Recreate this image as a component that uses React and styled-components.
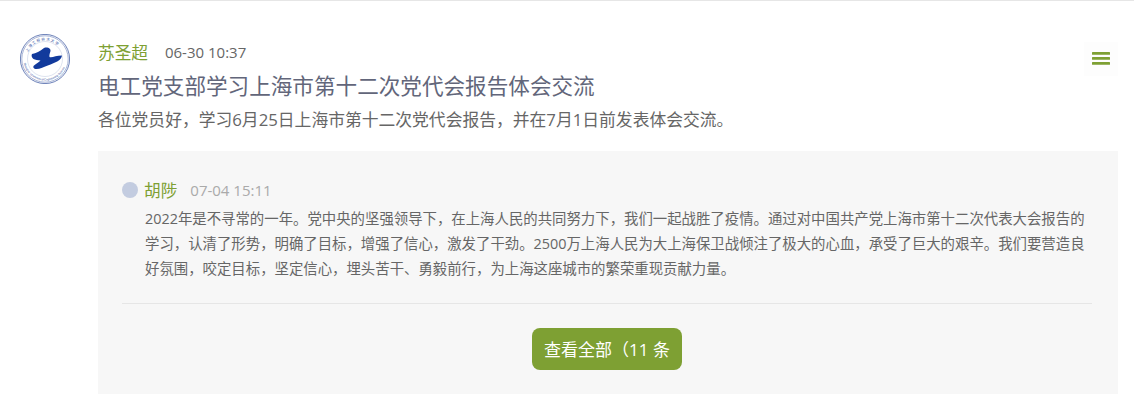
import React from "react";
import styled, { createGlobalStyle } from "styled-components";

const GlobalStyle = createGlobalStyle`
  html, body {
    margin: 0;
    padding: 0;
    background: #fff;
    font-family: "Open Sans", "Noto Sans CJK SC", sans-serif;
    overflow: hidden;
  }
`;

const Page = styled.div`
  box-sizing: border-box;
  height: 406px;
  border-top: 1px solid #e6e6e6;
  display: flex;
  padding: 33px 16px 0 20px;
  gap: 28px;
`;

const Avatar = styled.div`
  width: 50px;
  height: 50px;
  flex-shrink: 0;
`;

const Main = styled.div`
  flex: 1;
  position: relative;
  min-width: 0;
`;

const Meta = styled.div`
  display: flex;
  align-items: center;
  height: 36px;
`;

const Name = styled.span`
  color: #7ea033;
  font-size: 16.67px;
  margin-right: ${(p) => p.$gap}px;
`;

const Time = styled.span`
  color: ${(p) => p.$color};
  font-size: 15px;
`;

const Title = styled.div`
  color: #62667a;
  font-size: 21.6px;
  line-height: 32px;
`;

const Desc = styled.div`
  color: #666;
  font-size: 16.8px;
  line-height: 36px;
`;

const MenuButton = styled.div`
  position: absolute;
  top: 8px;
  right: 0;
  box-sizing: border-box;
  width: 34px;
  height: 34px;
  padding-bottom: 2px;
  background: #fdfdfd;
  display: flex;
  align-items: center;
  justify-content: center;
`;

const Panel = styled.div`
  margin-top: 13px;
  height: 243px;
  background: #f7f7f7;
  padding: 24px 26px 0 24px;
  box-sizing: border-box;
`;

const CommentHead = styled.div`
  display: flex;
  align-items: center;
  height: 30px;
`;

const Dot = styled.span`
  width: 16px;
  height: 16px;
  border-radius: 50%;
  background: #c3cce0;
  margin-right: 6px;
`;

const CommentBody = styled.div`
  margin: 1px 0 0 23px;
  color: #666;
  font-size: 14.4px;
  line-height: 25.2px;
`;

const Divider = styled.div`
  margin-top: 21px;
  height: 1px;
  background: #e6e6e6;
`;

const More = styled.div`
  display: flex;
  justify-content: center;
  margin-top: 24px;
`;

const MoreButton = styled.div`
  width: 150px;
  height: 42px;
  background: #7ea033;
  border-radius: 8px;
  color: #fff;
  font-size: 17px;
  display: flex;
  align-items: center;
  justify-content: center;
`;

const Logo = () => (
  <svg width="50" height="50" viewBox="0 0 50 50">
    <circle cx="25" cy="25" r="24.6" fill="#fff" stroke="#2c4a9a" strokeWidth="0.7" />
    <circle cx="25" cy="25" r="23.2" fill="none" stroke="#2c4a9a" strokeWidth="0.4" />
    <circle cx="25" cy="25" r="17.5" fill="none" stroke="#9fadd2" strokeWidth="0.35" />
    <defs>
      <path id="ring-top" d="M6.5 25a18.5 18.5 0 0 1 37 0" />
      <path id="ring-bottom" d="M3.5 25a21.5 21.5 0 0 0 43 0" />
    </defs>
    <text fontSize="3.6" fill="#3d5aa6" fontFamily="Noto Sans CJK SC" letterSpacing="1">
      <textPath href="#ring-top" startOffset="12%">上海工程技术大学</textPath>
    </text>
    <text fontSize="2.8" fill="#2c4a9a" fontFamily="Liberation Sans">
      <textPath href="#ring-bottom" startOffset="6%">Shanghai University of Engineering Science</textPath>
    </text>
    <path
      d="M12 20 C16 19.5 20 17 24 14 C27 12.8 31 14 30.5 17 C30 19 29 21 29.5 23 C32 24 36 21.5 42 21.5 C41.5 25 38 27.5 35 28.5 C32 30 29 31 26.5 32 C23 33.5 20 35 16.5 35 C13.5 35 12.5 33 14 31.5 C16 29.5 19 28.5 20.5 26.5 C18 26 15 26 13.5 25 C12 24 11 21.5 12 20 Z"
      fill="#123a9c"
    />
  </svg>
);

const MenuIcon = () => (
  <svg width="18" height="13" viewBox="0 0 18 13">
    <rect x="0" y="0" width="18" height="2.8" rx="0.5" fill="#7ea033" />
    <rect x="0" y="5" width="18" height="2.8" rx="0.5" fill="#7ea033" />
    <rect x="0" y="10" width="18" height="2.8" rx="0.5" fill="#7ea033" />
  </svg>
);

export default function App() {
  return (
    <>
      <GlobalStyle />
      <Page>
        <Avatar>
          <Logo />
        </Avatar>
        <Main>
          <Meta>
            <Name $gap={17}>苏圣超</Name>
            <Time $color="#666">06-30 10:37</Time>
          </Meta>
          <Title>电工党支部学习上海市第十二次党代会报告体会交流</Title>
          <Desc>各位党员好，学习6月25日上海市第十二次党代会报告，并在7月1日前发表体会交流。</Desc>
          <MenuButton>
            <MenuIcon />
          </MenuButton>
          <Panel>
            <CommentHead>
              <Dot />
              <Name $gap={13}>胡陟</Name>
              <Time $color="#aaa">07-04 15:11</Time>
            </CommentHead>
            <CommentBody>
              2022年是不寻常的一年。党中央的坚强领导下，在上海人民的共同努力下，我们一起战胜了疫情。通过对中国共产党上海市第十二次代表大会报告的学习，认清了形势，明确了目标，增强了信心，激发了干劲。2500万上海人民为大上海保卫战倾注了极大的心血，承受了巨大的艰辛。我们要营造良好氛围，咬定目标，坚定信心，埋头苦干、勇毅前行，为上海这座城市的繁荣重现贡献力量。
            </CommentBody>
            <Divider />
            <More>
              <MoreButton>查看全部（11 条</MoreButton>
            </More>
          </Panel>
        </Main>
      </Page>
    </>
  );
}
